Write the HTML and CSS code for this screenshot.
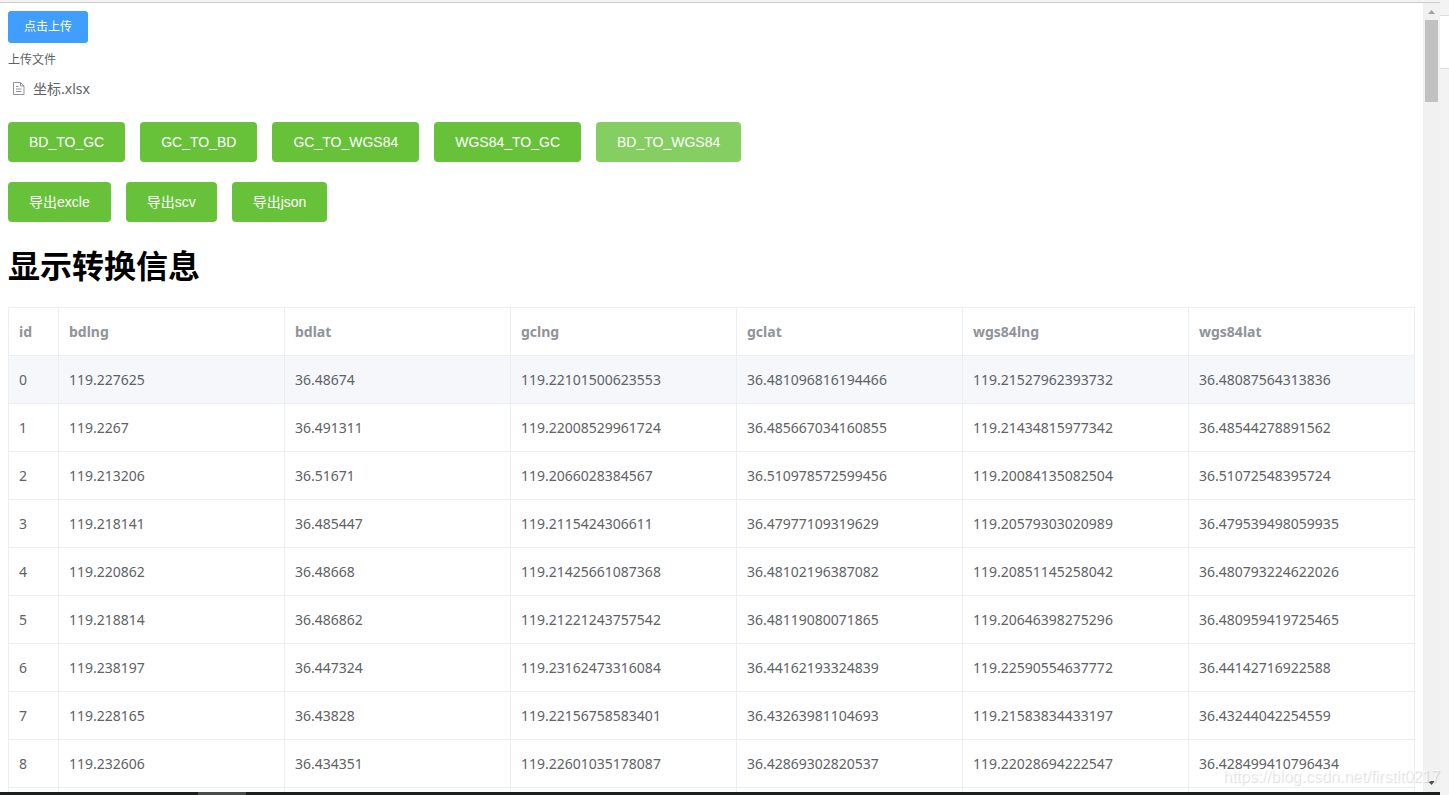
FILE: index.html
```html
<!DOCTYPE html>
<html lang="zh-CN">
<head>
<meta charset="utf-8">
<title>坐标转换</title>
<link rel="stylesheet" href="styles.css">
</head>
<body>
<div class="window">
  <div class="frame">
    <div class="viewport">
      <main class="page">
        <section class="upload">
          <button type="button" class="btn btn-primary">点击上传</button>
          <p class="upload-tip">上传文件</p>
          <a class="upload-file" href="#">
            <svg class="file-icon" viewBox="0 0 14 14" aria-hidden="true"><path d="M1.500.500H8.500L12 4V12.500H1.500ZM8.500.500V4H12M4 4.500H6.500M4 7H9.500M4 9.500H9.500"/></svg>
            <span>坐标.xlsx</span>
          </a>
        </section>
        <div class="actions">
          <button type="button" class="btn btn-success">BD_TO_GC</button>
          <button type="button" class="btn btn-success">GC_TO_BD</button>
          <button type="button" class="btn btn-success">GC_TO_WGS84</button>
          <button type="button" class="btn btn-success">WGS84_TO_GC</button>
          <button type="button" class="btn btn-success is-active">BD_TO_WGS84</button>
        </div>
        <div class="actions">
          <button type="button" class="btn btn-success">导出excle</button>
          <button type="button" class="btn btn-success">导出scv</button>
          <button type="button" class="btn btn-success">导出json</button>
        </div>
        <h1 class="title">显示转换信息</h1>
        <table class="data">
          <thead>
            <tr><th class="col-id">id</th><th>bdlng</th><th>bdlat</th><th>gclng</th><th>gclat</th><th>wgs84lng</th><th>wgs84lat</th></tr>
          </thead>
          <tbody>
            <tr class="is-hover"><td>0</td><td>119.227625</td><td>36.48674</td><td>119.22101500623553</td><td>36.481096816194466</td><td>119.21527962393732</td><td>36.48087564313836</td></tr>
            <tr><td>1</td><td>119.2267</td><td>36.491311</td><td>119.22008529961724</td><td>36.485667034160855</td><td>119.21434815977342</td><td>36.48544278891562</td></tr>
            <tr><td>2</td><td>119.213206</td><td>36.51671</td><td>119.2066028384567</td><td>36.510978572599456</td><td>119.20084135082504</td><td>36.51072548395724</td></tr>
            <tr><td>3</td><td>119.218141</td><td>36.485447</td><td>119.2115424306611</td><td>36.47977109319629</td><td>119.20579303020989</td><td>36.479539498059935</td></tr>
            <tr><td>4</td><td>119.220862</td><td>36.48668</td><td>119.21425661087368</td><td>36.48102196387082</td><td>119.20851145258042</td><td>36.480793224622026</td></tr>
            <tr><td>5</td><td>119.218814</td><td>36.486862</td><td>119.21221243757542</td><td>36.48119080071865</td><td>119.20646398275296</td><td>36.480959419725465</td></tr>
            <tr><td>6</td><td>119.238197</td><td>36.447324</td><td>119.23162473316084</td><td>36.44162193324839</td><td>119.22590554637772</td><td>36.44142716922588</td></tr>
            <tr><td>7</td><td>119.228165</td><td>36.43828</td><td>119.22156758583401</td><td>36.43263981104693</td><td>119.21583834433197</td><td>36.43244042254559</td></tr>
            <tr><td>8</td><td>119.232606</td><td>36.434351</td><td>119.22601035178087</td><td>36.42869302820537</td><td>119.22028694222547</td><td>36.428499410796434</td></tr>
            <tr><td></td><td></td><td></td><td></td><td></td><td></td><td></td></tr>
          </tbody>
        </table>
      </main>
      <div class="scrollbar" aria-hidden="true">
        <svg class="arrow arrow-up" viewBox="0 0 7 4"><path d="M0 4L3.500 0L7 4Z"/></svg>
        <div class="thumb"></div>
        <svg class="arrow arrow-down" viewBox="0 0 7 4"><path d="M0 0L3.500 4L7 0Z"/></svg>
      </div>
    </div>
    <div class="taskbar"><div class="taskbar-item"></div></div>
  </div>
  <div class="backdrop"><div class="backdrop-panel"></div></div>
  <div class="watermark">https://blog.csdn.net/firstlt0217</div>
</div>
</body>
</html>
```
FILE: styles.css
```css
* {
  box-sizing: border-box;
}

body {
  margin: 0;
  background: #fff;
  color: #606266;
  font-family: "Noto Sans", "Noto Sans CJK SC", sans-serif;
  font-size: 14px;
}

.window {
  position: relative;
  display: flex;
  height: 100vh;
  overflow: hidden;
}

.frame {
  flex: 1;
  min-width: 0;
  display: flex;
  flex-direction: column;
  border-top: 2px solid #f3f3f3;
}

.viewport {
  flex: 1;
  min-height: 0;
  display: flex;
  border-top: 1px solid #ccc;
}

.page {
  flex: 1;
  min-width: 0;
  padding: 8px;
  overflow: hidden;
}

.btn {
  display: inline-block;
  border: 0;
  border-radius: 3px;
  color: #fff;
  font-family: "Liberation Sans", "Noto Sans CJK SC", sans-serif;
  line-height: 16px;
  white-space: nowrap;
}

.btn-primary {
  display: block;
  padding: 8px 16px;
  background: #409eff;
  font-size: 12px;
}

.btn-success {
  height: 40px;
  padding: 0 21px;
  border-radius: 4px;
  background: #67c23a;
  font-size: 14px;
}

.btn-success.is-active {
  background: #85ce61;
}

.upload-tip {
  margin: 8px 0 0;
  font-size: 12px;
  line-height: 18px;
}

.upload-file {
  display: flex;
  align-items: center;
  gap: 7px;
  width: 50%;
  margin: 7px 0 20px;
  padding-left: 4px;
  color: inherit;
  line-height: 26px;
  text-decoration: none;
}

.file-icon {
  width: 14px;
  height: 14px;
  fill: none;
  stroke: #909399;
}

.actions {
  display: flex;
  gap: 15px;
  margin-bottom: 20px;
}

.title {
  margin: 0 0 17px;
  color: #000;
  font-size: 32px;
  line-height: 48px;
}

.data {
  width: 100%;
  table-layout: fixed;
  border-spacing: 0;
  border-top: 1px solid #ebeef5;
  border-left: 1px solid #ebeef5;
}

.data th,
.data td {
  height: 48px;
  padding: 0 10px;
  border-right: 1px solid #ebeef5;
  border-bottom: 1px solid #ebeef5;
  text-align: left;
}

.data th {
  color: #909399;
}

.data .col-id {
  width: 50px;
}

.is-hover td {
  background: #f5f7fa;
}

.scrollbar {
  width: 17px;
  display: flex;
  flex-direction: column;
  align-items: center;
  padding: 7px 0;
  background: #f1f1f1;
}

.arrow {
  width: 7px;
  height: 4px;
}

.arrow-up {
  fill: #a3a3a3;
}

.arrow-down {
  margin-top: auto;
  fill: #505050;
}

.thumb {
  width: 13px;
  height: 82px;
  margin-top: 6px;
  background: #c1c1c1;
}

.taskbar {
  height: 3px;
  padding-left: 198px;
  background: #1c1f1e;
}

.taskbar-item {
  width: 48px;
  height: 3px;
  background: #4a4c4b;
}

.backdrop {
  width: 9px;
  padding-top: 15px;
  background: #f3f3f3;
}

.backdrop-panel {
  height: 54px;
  border: solid #dcdcdc;
  border-width: 1px 0;
  background: #fff;
}

.watermark {
  position: absolute;
  right: 9px;
  bottom: 8px;
  color: rgba(255, 255, 255, 0.6);
  font-family: "Liberation Sans", sans-serif;
  font-size: 16px;
  line-height: 20px;
  text-shadow: 1px 1px 1px rgba(0, 0, 0, 0.14);
}
```
